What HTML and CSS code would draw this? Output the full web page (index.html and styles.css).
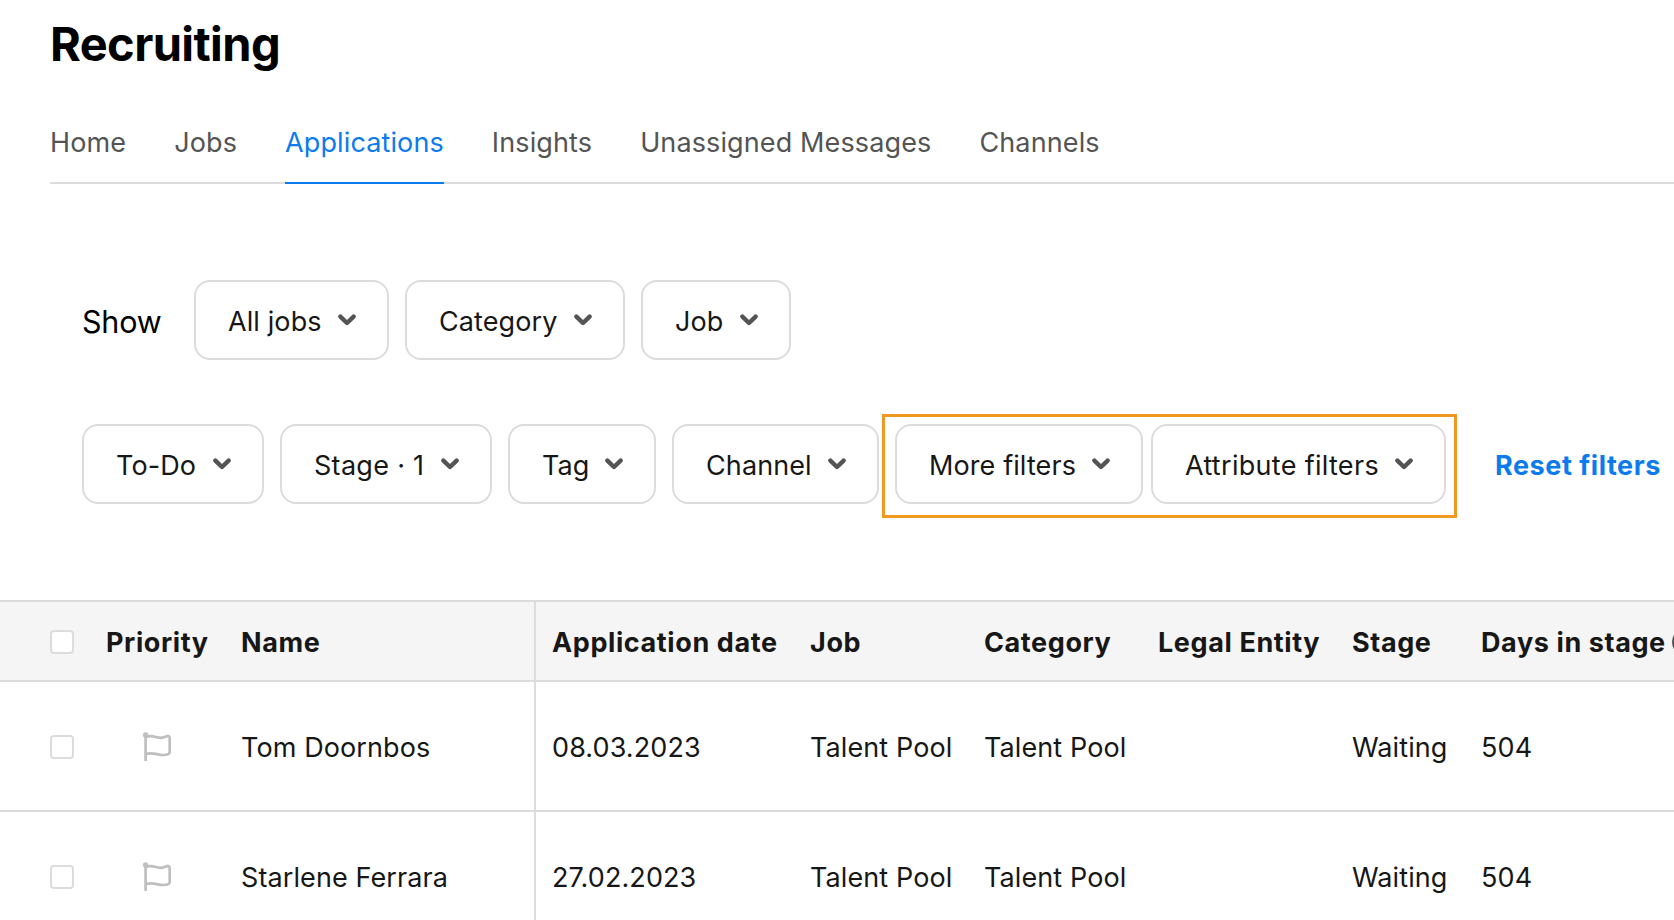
FILE: index.html
```html
<!DOCTYPE html>
<html lang="en">
<head>
    <meta charset="UTF-8">
    <meta name="viewport" content="width=device-width, initial-scale=1.0">
    <title>Recruiting</title>
    <link rel="stylesheet" href="styles.css">
</head>
<body>
    <svg class="sprite">
        <symbol id="chevron" viewBox="0 0 18 12">
            <path d="M2.4 2.6 L9 9 L15.6 2.6" fill="none" stroke="currentColor" stroke-width="4.4" stroke-linecap="round" stroke-linejoin="round" />
        </symbol>
        <symbol id="flag" viewBox="0 0 30 32">
            <path d="M3.6 4 V30 M4 6 C10 3.5 14 6.8 19 6.8 C23 6.8 25 4.5 26.5 5 C27.5 5.3 27.7 6 27.7 7 V21 C27.7 22.5 26 24 21 24 C15 24 11 20.8 4 23" fill="none" stroke="currentColor" stroke-width="2.7" stroke-linejoin="round" />
            <circle cx="3.6" cy="4" r="2.7" fill="currentColor" />
        </symbol>
    </svg>

    <header class="header">
        <h1>Recruiting</h1>
        <nav class="tabs">
            <a class="tab">Home</a>
            <a class="tab">Jobs</a>
            <a class="tab active">Applications</a>
            <a class="tab">Insights</a>
            <a class="tab">Unassigned Messages</a>
            <a class="tab">Channels</a>
        </nav>
    </header>

    <section class="filters">
        <div class="filter-row">
            <span class="show-label">Show</span>
            <button class="filter all-jobs">All jobs <svg class="chevron"><use href="#chevron" /></svg></button>
            <button class="filter category">Category <svg class="chevron"><use href="#chevron" /></svg></button>
            <button class="filter job">Job <svg class="chevron"><use href="#chevron" /></svg></button>
        </div>
        <div class="filter-row">
            <button class="filter todo">To-Do <svg class="chevron"><use href="#chevron" /></svg></button>
            <button class="filter stage">Stage · 1 <svg class="chevron"><use href="#chevron" /></svg></button>
            <button class="filter tag">Tag <svg class="chevron"><use href="#chevron" /></svg></button>
            <button class="filter channel">Channel <svg class="chevron"><use href="#chevron" /></svg></button>
            <div class="highlight">
                <button class="filter more">More filters <svg class="chevron"><use href="#chevron" /></svg></button>
                <button class="filter attribute">Attribute filters <svg class="chevron"><use href="#chevron" /></svg></button>
            </div>
            <a class="reset">Reset filters</a>
        </div>
    </section>

    <div class="table-wrapper">
        <table class="applications">
            <colgroup>
                <col class="col-check">
                <col class="col-priority">
                <col class="col-name">
                <col class="col-date">
                <col class="col-job">
                <col class="col-category">
                <col class="col-entity">
                <col class="col-stage">
                <col class="col-days">
            </colgroup>
            <thead>
                <tr>
                    <th class="check"><span class="checkbox"></span></th>
                    <th>Priority</th>
                    <th class="name">Name</th>
                    <th>Application date</th>
                    <th>Job</th>
                    <th>Category</th>
                    <th>Legal Entity</th>
                    <th>Stage</th>
                    <th><div class="days"><span class="days-label">Days in stage</span><span class="help"></span></div></th>
                </tr>
            </thead>
            <tbody>
                <tr>
                    <td class="check"><span class="checkbox"></span></td>
                    <td class="priority"><svg class="flag"><use href="#flag" /></svg></td>
                    <td class="name">Tom Doornbos</td>
                    <td>08.03.2023</td>
                    <td>Talent Pool</td>
                    <td>Talent Pool</td>
                    <td></td>
                    <td>Waiting</td>
                    <td>504</td>
                </tr>
                <tr>
                    <td class="check"><span class="checkbox"></span></td>
                    <td class="priority"><svg class="flag"><use href="#flag" /></svg></td>
                    <td class="name">Starlene Ferrara</td>
                    <td>27.02.2023</td>
                    <td>Talent Pool</td>
                    <td>Talent Pool</td>
                    <td></td>
                    <td>Waiting</td>
                    <td>504</td>
                </tr>
            </tbody>
        </table>
    </div>
</body>
</html>
```
FILE: styles.css
```css
:root {
    --text-color: #171717;
    --muted-color: #545454;
    --border-color: #dcdcdc;
    --link-color: #0b7bee;
    --highlight-color: #f0981f;
}

* {
    box-sizing: border-box;
}

body {
    margin: 0;
    height: 100vh;
    overflow: hidden;
    background: #ffffff;
    color: var(--text-color);
    font-family: Inter, sans-serif;
    font-size: 27px;
    letter-spacing: 0.1px;
}

.sprite {
    display: none;
}

.header {
    padding-left: 50px;
}

h1 {
    margin: 0;
    padding-top: 14px;
    font-size: 47px;
    line-height: 60px;
    letter-spacing: -0.6px;
    color: #000000;
}

.tabs {
    display: flex;
    gap: 48px;
    height: 77px;
    margin-top: 33px;
    border-bottom: 2px solid var(--border-color);
}

.tab {
    height: 77px;
    padding-top: 19px;
    line-height: 34px;
    letter-spacing: 0.12px;
    color: var(--muted-color);
    white-space: nowrap;
}

.tab.active {
    color: var(--link-color);
    border-bottom: 2px solid var(--link-color);
}

.filters {
    padding: 96px 0 0 82px;
}

.filter-row {
    display: flex;
    align-items: center;
    gap: 16px;
    height: 80px;
    margin-bottom: 64px;
    white-space: nowrap;
}

.filter-row:last-child {
    margin-bottom: 0;
}

.show-label {
    width: 96px;
    padding-top: 2px;
    font-size: 30.5px;
    letter-spacing: -0.2px;
    color: #000000;
}

.filter {
    display: flex;
    flex-shrink: 0;
    align-items: center;
    justify-content: space-between;
    height: 80px;
    padding: 2px 31px 0 32px;
    background: #ffffff;
    border: 2px solid var(--border-color);
    border-radius: 16px;
    color: var(--text-color);
    font-family: inherit;
    font-size: 27px;
    letter-spacing: 0.1px;
}

.all-jobs { width: 195px; }
.category { width: 220px; }
.job { width: 150px; }
.todo { width: 182px; }
.stage { width: 212px; letter-spacing: 0.3px; }
.tag { width: 148px; }
.channel { width: 207px; }
.more { width: 248px; }
.attribute { width: 295px; letter-spacing: 0.3px; }

.chevron {
    width: 18px;
    height: 12px;
    margin-top: -3px;
    color: var(--muted-color);
}

.highlight {
    display: flex;
    gap: 8px;
    margin: 4px 0 0 -13px;
    padding: 7px 8px 11px 10px;
    border: 3px solid var(--highlight-color);
}

.reset {
    margin-left: 22px;
    padding-top: 2px;
    color: var(--link-color);
    font-weight: 700;
    letter-spacing: 0.55px;
}

.table-wrapper {
    margin-top: 96px;
    overflow: hidden;
}

.applications {
    width: 1840px;
    table-layout: fixed;
    border-collapse: separate;
    border-spacing: 0;
    border-top: 2px solid var(--border-color);
}

.col-check { width: 90px; }
.col-priority { width: 135px; }
.col-name { width: 311px; }
.col-date { width: 258px; }
.col-job { width: 174px; }
.col-category { width: 174px; }
.col-entity { width: 194px; }
.col-stage { width: 129px; }

th,
td {
    padding: 2px 0 0 16px;
    border-bottom: 2px solid var(--border-color);
    text-align: left;
    white-space: nowrap;
}

th {
    height: 80px;
    background: #f5f5f5;
    font-weight: 700;
    letter-spacing: 0.6px;
}

td {
    height: 130px;
}

.check {
    padding-left: 50px;
}

.name {
    border-right: 2px solid var(--border-color);
}

.checkbox {
    display: block;
    width: 24px;
    height: 24px;
    background: #ffffff;
    border: 2px solid var(--border-color);
    border-radius: 4px;
}

.priority {
    padding-left: 52px;
}

.flag {
    display: block;
    width: 30px;
    height: 32px;
    color: #bfbfbf;
}

.days {
    display: flex;
    align-items: center;
    gap: 8px;
}

.days-label {
    width: 183px;
}

.help {
    width: 28px;
    height: 28px;
    border: 3px solid var(--muted-color);
    border-radius: 50%;
}
```
